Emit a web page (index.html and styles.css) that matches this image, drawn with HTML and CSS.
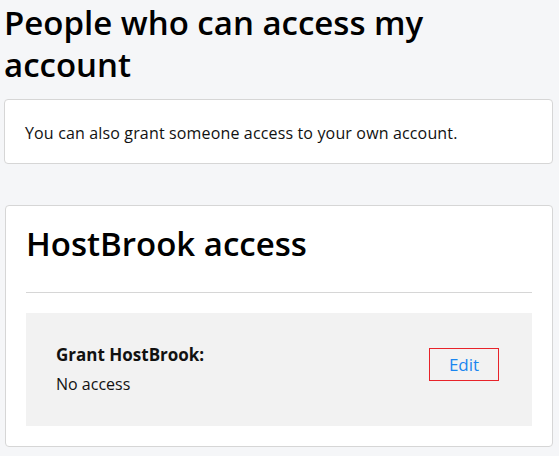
FILE: index.html
```html
<!DOCTYPE html>
<html lang="en">
<head>
    <meta charset="UTF-8">
    <meta name="viewport" content="width=device-width, initial-scale=1.0">
    <title>People who can access my account</title>
    <link rel="stylesheet" href="styles.css">
</head>
<body>
    <main class="page">
        <h1 class="page-title">People who can access my account</h1>

        <section class="card intro">
            <p>You can also grant someone access to your own account.</p>
        </section>

        <section class="card access">
            <h2 class="access-title">HostBrook access</h2>
            <hr class="divider">
            <div class="grant-row">
                <div class="grant-info">
                    <div class="grant-label">Grant HostBrook:</div>
                    <div class="grant-value">No access</div>
                </div>
                <button class="edit-btn" type="button">Edit</button>
            </div>
        </section>
    </main>
</body>
</html>
```

FILE: styles.css
```css
body {
    font-family: "Open Sans", "Noto Sans", sans-serif;
    background-color: #f5f6f8;
    margin: 0;
    padding: 0;
    color: #111;
}

.page {
    padding: 0 6px 0 4px;
}

.page-title {
    font-size: 33px;
    line-height: 42px;
    font-weight: 600;
    margin: 2px 0 13px 0;
    color: #000;
}

.card {
    background-color: #fff;
    border: 1px solid #d6d6d6;
    border-radius: 4px;
}

.intro {
    padding: 21px 20px 18px;
}

.intro p {
    margin: 0;
    font-size: 16px;
    line-height: 24px;
    letter-spacing: 0.15px;
}

.access {
    margin-top: 41px;
    margin-left: 1px;
    padding: 18px 20px 20px 20px;
}

.access-title {
    font-size: 33px;
    line-height: 40px;
    font-weight: 600;
    margin: 0 0 28px 0;
    color: #000;
}

.divider {
    border: none;
    border-top: 1px solid #d6d6d6;
    margin: 0 0 20px 0;
}

.grant-row {
    background-color: #f2f2f2;
    display: flex;
    justify-content: space-between;
    align-items: center;
    padding: 0 33px 0 30px;
    height: 113px;
}

.grant-label {
    font-size: 17px;
    font-weight: 700;
    line-height: 24px;
    margin-bottom: 5px;
}

.grant-value {
    font-size: 16px;
    line-height: 24px;
}

.edit-btn {
    font-family: inherit;
    font-size: 17px;
    color: #1a86f0;
    background: transparent;
    border: 1px solid #e8232a;
    width: 70px;
    height: 33px;
    padding: 0;
    margin-bottom: 10px;
    cursor: pointer;
}
```
